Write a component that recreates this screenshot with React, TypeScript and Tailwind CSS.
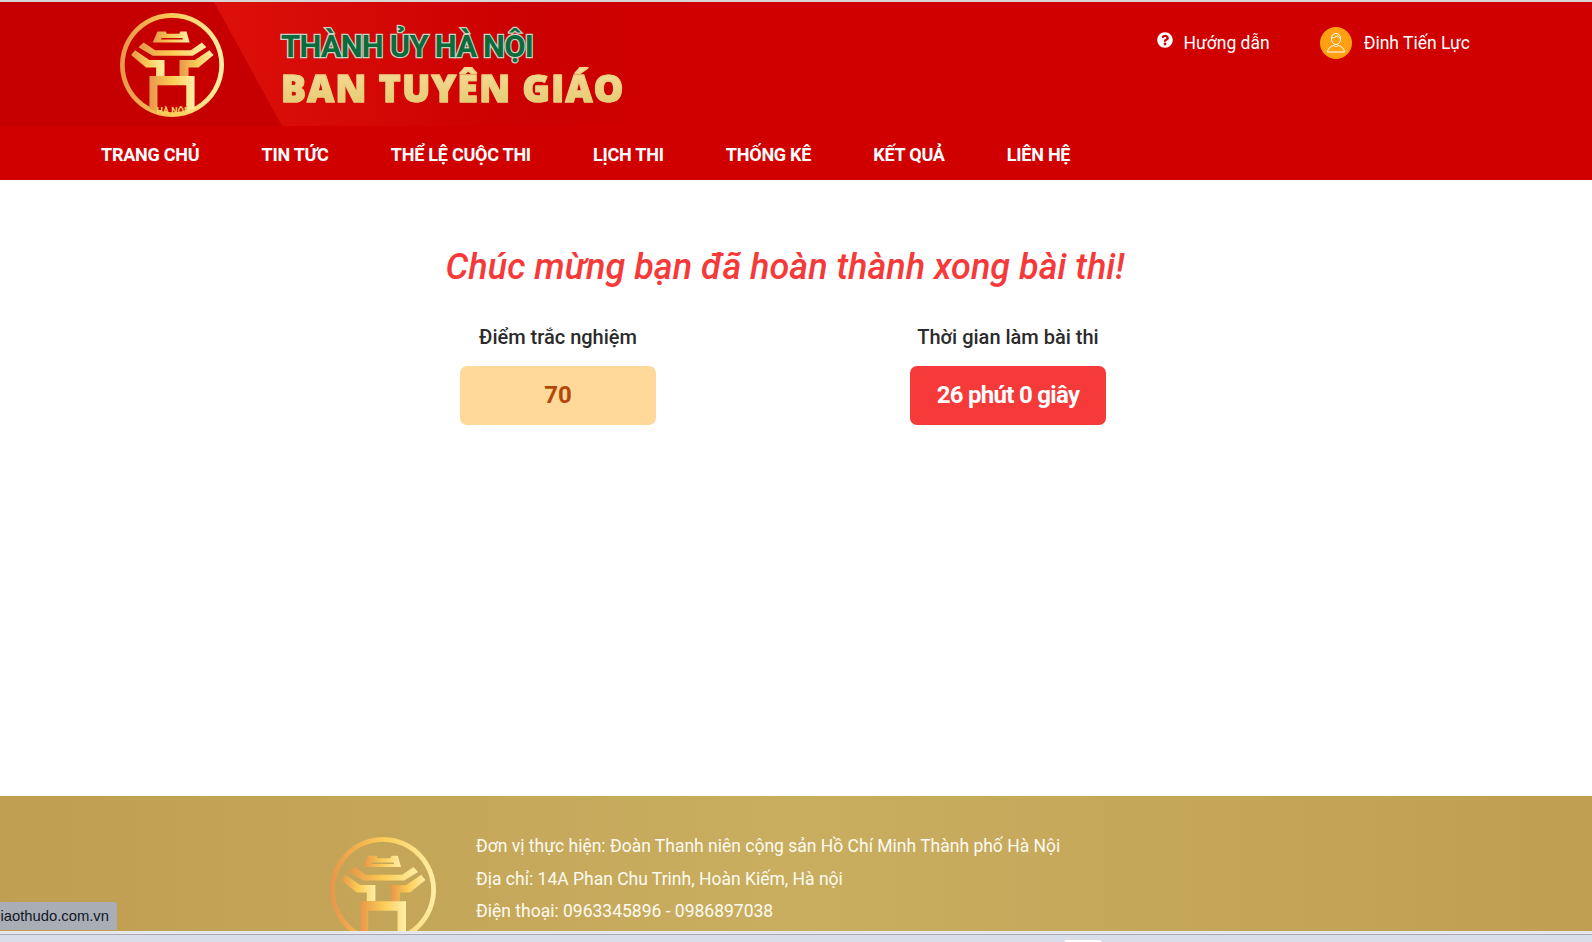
const navItems = ["TRANG CHỦ", "TIN TỨC", "THỂ LỆ CUỘC THI", "LỊCH THI", "THỐNG KÊ", "KẾT QUẢ", "LIÊN HỆ"];

function Logo({ id, className, label }: { id: string; className: string; label?: boolean }) {
  return (
    <svg viewBox="0 0 100 100" className={className}>
      <defs>
        <linearGradient id={id} x1="0" y1="0" x2="1" y2="0">
          <stop offset="0" stopColor="#e8964a" />
          <stop offset="0.5" stopColor="#fbcb55" />
          <stop offset="1" stopColor="#ffeea6" />
        </linearGradient>
      </defs>
      <g fill={`url(#${id})`}>
        <path fillRule="evenodd" d="M50 0a50 50 0 1 0 .01 0ZM50 4.500a45.500 45.500 0 1 1-.01 0Z" />
        <path fillRule="evenodd" d="M36 17.700h8l1 2.300h12l1-2.300h6l3 10.600H31.500ZM40 24l-.6 1.500h21L60 24Z" />
        <path d="M22.800 28.300 17.700 33l13.800 8H70l13-8-4.200-4.700L68 35.700H33.800Z" />
        <path d="M14.500 35.700 10.600 40.500 25 52.400h9.700v8.100h8.100V45.300H28.300Z" />
        <path d="M86 35.700 90 40.500 75.500 52.400h-9.600v8.100h-8.700V45.300H72Z" />
        <path d="M28.300 60.500h43.400V92l-8 3V69.500H36V95l-7.700-3Z" />
      </g>
      {label && (
        <text x="35" y="97" textLength="29" lengthAdjust="spacingAndGlyphs" fill="#fcd25e" fontSize="8" fontWeight="700" fontFamily="Roboto, sans-serif">
          HÀ NỘI
        </text>
      )}
    </svg>
  );
}

function UserIcon() {
  return (
    <svg viewBox="0 0 32 32" className="h-8 w-8" fill="none" stroke="#fff" strokeWidth="1">
      <circle cx="16" cy="16" r="16" fill="#ffa012" stroke="none" />
      <path d="M11.500 11.500c0-3.500 2-5 4.500-5s4.500 1.500 4.500 5c0 3.500-2 6-4.500 6s-4.500-2.500-4.500-6Z" />
      <path d="M11.500 11c2 0 5-1 6-2.500 .5 1.500 1.500 2.500 3 2.500" />
      <path d="M7.500 25c.5-4 3-5.500 6-6.500 1.500 1.200 3.500 1.200 5 0 3 1 5.500 2.500 6 6.500Z" />
    </svg>
  );
}

export default function App() {
  return (
    <div className="relative h-[942px] overflow-hidden bg-white font-['Roboto',sans-serif]">
      <div className="h-[2px] bg-[#d6d6d6]" />

      {/* Header */}
      <header className="bg-[#d00000]">
        <div className="relative flex h-[124px] justify-between overflow-hidden bg-linear-to-r from-[#dc0f0a] from-[14%] via-[#cb0000] via-[33%] to-[#d00000] to-[45%]">
          <div className="absolute inset-y-0 left-0 w-[282px] bg-[#c60000] [clip-path:polygon(0_0,214px_0,282px_100%,0_100%)]" />
          <div className="relative flex pl-[120px] pt-[11px]">
            <Logo id="logo-top" label className="h-[104px] w-[104px]" />
            <div className="ml-[57px] flex flex-col">
              <div className="mt-[15px] text-[31px] leading-[37px] font-bold tracking-[-0.8px] text-[#0b6b3b] [-webkit-text-stroke:2.5px_#c8d2c4] [paint-order:stroke_fill]">
                THÀNH ỦY HÀ NỘI
              </div>
              <div className="bg-linear-to-b from-[#f7dc9c] to-[#e3c86a] bg-clip-text font-['Open_Sans',sans-serif] text-[37px] leading-[46px] font-extrabold tracking-[1.400px] text-transparent [-webkit-text-stroke:1.2px_#ecd07f]">
                BAN TUYÊN GIÁO
              </div>
            </div>
          </div>
          <div className="relative flex items-start pr-[122px] pt-[25px] text-[17.5px] leading-[32px] text-white">
            <svg viewBox="0 0 512 512" className="mr-[10px] mt-[5px] h-4 w-4" fill="#fff">
              <path d="M504 256c0 137-111 248-248 248S8 393 8 256 119 8 256 8s248 111 248 248zM262.700 90c-54.500 0-89.300 23-116.500 63.800-3.500 5.300-2.400 12.400 2.700 16.300l34.700 26.300c5.200 3.900 12.600 3 16.700-2.100 17.900-22.700 30.100-35.800 57.300-35.800 20.400 0 45.700 13.100 45.700 33 0 15-12.400 22.700-32.600 34-23.600 13.200-54.800 29.700-54.800 70.900V300c0 6.600 5.400 12 12 12h56c6.600 0 12-5.400 12-12v-1.300c0-28.600 83.500-29.800 83.500-107.100C379.500 133.400 319 90 262.700 90zM256 339c-25.400 0-46 20.600-46 46s20.600 46 46 46 46-20.600 46-46-20.600-46-46-46z" />
            </svg>
            <span>Hướng dẫn</span>
            <div className="ml-[50px] mr-3">
              <UserIcon />
            </div>
            <span>Đinh Tiến Lực</span>
          </div>
        </div>
        <nav className="flex h-[54px] items-center gap-[62.200px] pl-[101px] pt-[2px] text-[18px] font-bold tracking-[-0.25px] text-white">
          {navItems.map((item) => (
            <a key={item}>{item}</a>
          ))}
        </nav>
      </header>

      {/* Result */}
      <main className="flex h-[616px] flex-col items-center pr-[22px] pt-[66px]">
        <h1 className="text-[36px] leading-[42px] font-medium italic text-[#f63939]">
          Chúc mừng bạn đã hoàn thành xong bài thi!
        </h1>
        <div className="mt-[33px] flex gap-[254px] pr-[4px]">
          <div className="flex w-[196px] flex-col items-center">
            <div className="text-[20px] leading-[32px] font-medium text-[#2b2b2b]">Điểm trắc nghiệm</div>
            <div className="mt-[13px] flex h-[59px] w-full items-center justify-center rounded-[7px] bg-[#fed999] pb-[2px] text-[24px] font-bold text-[#b4480a]">
              70
            </div>
          </div>
          <div className="flex w-[196px] flex-col items-center">
            <div className="text-[20px] leading-[32px] font-medium text-[#2b2b2b]">Thời gian làm bài thi</div>
            <div className="mt-[13px] flex h-[59px] w-full items-center justify-center rounded-[7px] bg-[#f63939] pb-[2px] text-[24px] font-bold tracking-[-0.7px] text-white">
              26 phút 0 giây
            </div>
          </div>
        </div>
      </main>

      {/* Footer */}
      <footer className="flex h-[135px] overflow-hidden bg-linear-to-r from-[#c09e52] via-[#c9ae60] to-[#c09e52] pl-[330px]">
        <Logo id="logo-bottom" className="mt-[41px] h-[106px] w-[106px] shrink-0" />
        <div className="ml-[40px] pt-[34px] text-[17.5px] leading-[32.500px] text-[#fdfaf0]">
          <div>Đơn vị thực hiện: Đoàn Thanh niên cộng sản Hồ Chí Minh Thành phố Hà Nội</div>
          <div>Địa chỉ: 14A Phan Chu Trinh, Hoàn Kiếm, Hà nội</div>
          <div>Điện thoại: 0963345896 - 0986897038</div>
        </div>
      </footer>

      {/* Browser bottom edge */}
      <div className="h-[3px] bg-[#e6e7ea]" />
      <div className="flex h-[8px] justify-start border-t border-[#a9abb2] bg-[#d9dce9] pl-[1064px]">
        <div className="mt-[5px] h-[3px] w-[38px] rounded-t-[3px] bg-white" />
      </div>

      {/* Status bubble */}
      <div className="absolute bottom-[12px] left-0 flex h-[28px] w-[117px] items-center justify-end rounded-tr-[4px] bg-[#a9adb5] pr-[8px] font-['Liberation_Sans',sans-serif] text-[14.8px] text-[#111827]">
        iaothudo.com.vn
      </div>
    </div>
  );
}
